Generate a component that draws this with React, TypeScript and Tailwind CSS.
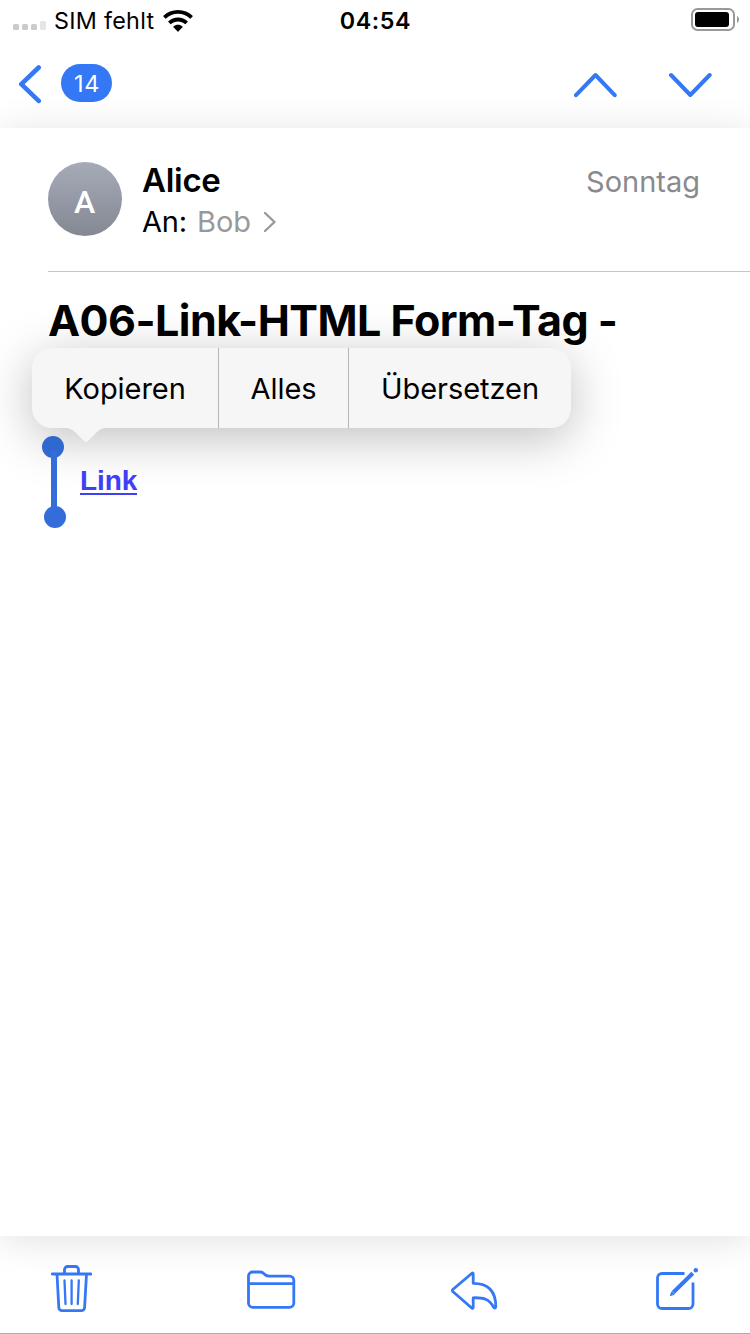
import type { ReactNode } from "react";

function StatusBar() {
  return (
    <div className="grid h-10 grid-cols-3 items-center pl-3 pr-[10px] text-[23.3px] leading-none">
      <div className="flex items-center">
        <svg width="34" height="12" viewBox="0 0 34 12" className="mt-[11px]">
          <rect x="1" y="5" width="6" height="6" rx="1.6" fill="#cbcbcb" />
          <rect x="10" y="5" width="6" height="6" rx="1.6" fill="#cbcbcb" />
          <rect x="19" y="5" width="6" height="6" rx="1.6" fill="#cbcbcb" />
          <rect x="28" y="2" width="6" height="9" rx="1.6" fill="#e5e5e5" />
        </svg>
        <span className="ml-2 mt-[2px] whitespace-nowrap tracking-[0.3px]">SIM fehlt</span>
        <svg width="30" height="22" viewBox="0 0 30 21.200" preserveAspectRatio="none" className="ml-[9px] mt-[2px] shrink-0">
          <path d="M15 0C9.3 0 4.100 2.100.4 5.600a.5.500 0 0 0 0 .7l2 2a.5.500 0 0 0 .7 0C6.200 5.400 10.400 3.700 15 3.700s8.800 1.700 11.900 4.600a.5.500 0 0 0 .7 0l2-2a.5.500 0 0 0 0-.7C25.900 2.100 20.700 0 15 0z" />
          <path d="M15 7.200c-3.700 0-7.100 1.400-9.600 3.700a.5.500 0 0 0 0 .7l2 2a.5.500 0 0 0 .7 0C9.900 12 12.300 11 15 11s5.100 1 6.900 2.600a.5.500 0 0 0 .7 0l2-2a.5.500 0 0 0 0-.7C22.100 8.600 18.700 7.200 15 7.200z" />
          <path d="M15 14.300c-1.700 0-3.300.6-4.500 1.600a.5.500 0 0 0 0 .8l4.100 4.100a.5.500 0 0 0 .8 0l4.100-4.100a.5.500 0 0 0 0-.8c-1.200-1-2.800-1.600-4.500-1.600z" />
        </svg>
      </div>
      <div className="mt-[2px] pr-px text-center font-semibold tracking-[0.6px]">04:54</div>
      <div className="flex justify-end">
        <svg width="50" height="24" viewBox="0 0 50 24" fill="none">
          <rect x="2" y="1" width="42" height="21" rx="5.500" stroke="#999" strokeWidth="2" />
          <rect x="5" y="4" width="34" height="15" rx="3" fill="#000" />
          <path d="M47 8v7c1.300-.6 2-2 2-3.500S48.300 8.600 47 8z" fill="#999" />
        </svg>
      </div>
    </div>
  );
}

function NavBar() {
  return (
    <div className="flex h-[88px] items-start text-[#3478f6]">
      <svg width="24" height="40" viewBox="0 0 24 40" className="ml-[18px] mt-6" fill="none" stroke="currentColor" strokeWidth="4.600" strokeLinecap="round" strokeLinejoin="round">
        <path d="M20.700 3.500 3.300 20.200 20.700 36.900" />
      </svg>
      <div className="ml-[19px] mt-6 flex h-[38px] w-[51px] items-center justify-center rounded-full bg-[#3478f6] pl-px pt-px text-[23.500px] tracking-[0.6px] text-white">14</div>
      <svg width="44" height="26" viewBox="0 0 44 26" className="ml-auto mt-8" fill="none" stroke="currentColor" strokeWidth="4" strokeLinecap="round" strokeLinejoin="round">
        <path d="M3 23.200 22.500 3 41.700 23.200" />
      </svg>
      <svg width="44" height="26" viewBox="0 0 44 26" className="ml-[51px] mr-[38px] mt-8" fill="none" stroke="currentColor" strokeWidth="4" strokeLinecap="round" strokeLinejoin="round">
        <path d="M3 3 22.300 23 41.700 3" />
      </svg>
    </div>
  );
}

function MessageHeader() {
  return (
    <header className="ml-12 flex h-36 shrink-0 items-start border-b border-[#c6c6c8] pr-[50px] pt-[34px]">
      <div className="flex size-[74px] items-center justify-center rounded-full bg-linear-to-b from-[#a6abb9] to-[#848892] pr-px pt-[5px] font-['Roboto','Inter',sans-serif] text-[32px] font-medium leading-none text-white">
        A
      </div>
      <div className="ml-5">
        <div className="-mt-px text-[33px] font-semibold leading-[38px] tracking-[-0.3px]">Alice</div>
        <div className="mt-1 flex items-center text-[29px] leading-[38px]">
          <span className="tracking-[-0.2px]">An:</span>
          <span className="ml-[10px] text-[#999]">Bob</span>
          <svg width="14" height="22" viewBox="0 0 14 22" className="ml-3" fill="none" stroke="#999" strokeWidth="2.400" strokeLinecap="round" strokeLinejoin="round">
            <path d="M2 2 11.500 11 2 20" />
          </svg>
        </div>
      </div>
      <div className="ml-auto text-[29px] leading-[40px] text-[#8a8a8e]">Sonntag</div>
    </header>
  );
}

function EditMenu() {
  return (
    <div className="absolute left-8 top-[220px] flex h-20 w-[539px] rounded-[20px] bg-[#f6f6f6] text-[29px] tracking-[-0.05px] shadow-[0_10px_50px_rgba(0,0,0,0.26)]">
      <div className="flex w-[187px] items-center justify-center border-r border-[#b5b5b5] pt-[2px]">Kopieren</div>
      <div className="flex w-[130px] items-center justify-center border-r border-[#b5b5b5] pt-[2px]">Alles</div>
      <div className="flex flex-1 items-center justify-center pt-[2px]">Übersetzen</div>
      <svg width="44" height="16" viewBox="0 0 44 16" className="absolute left-8 top-[79px]" fill="#f6f6f6">
        <path d="M0 0V1C6 1 9 3 12 6l8 8c1.500 1.400 2.500 1.400 4 0l8-8c3-3 6-5 12-5V0z" />
      </svg>
    </div>
  );
}

function Icon({ w, h, children }: { w: number; h: number; children: ReactNode }) {
  return (
    <svg width={w} height={h} viewBox={`0 0 ${w} ${h}`} fill="none" stroke="currentColor" strokeWidth="2.800" strokeLinecap="round" strokeLinejoin="round">
      {children}
    </svg>
  );
}

function Toolbar() {
  return (
    <footer className="flex h-[98px] shrink-0 items-start justify-between border-b border-[#ababab] pl-[50px] pr-[50px] pt-7 text-[#3478f6]">
      <Icon w={42} h={50}>
        <path d="M2.300 10H41M14.500 10V5.500a3 3 0 0 1 3-3h8a3 3 0 0 1 3 3V10M7 10l1.800 33.500a3.500 3.500 0 0 0 3.500 3.200h18.800a3.500 3.500 0 0 0 3.500-3.200L36.500 10" />
        <path d="M14.500 16.500 15.500 40M21.600 16.500V40M28.800 16.500 27.800 40" strokeWidth="2.300" />
      </Icon>
      <Icon w={52} h={50}>
        <path d="M3.500 39v-27a4 4 0 0 1 4-4h7.300c2 0 3 .4 4.200 1.700l1.300 1.200c1.200 1.100 2 1.200 3.700 1.200H44.500a4.300 4.300 0 0 1 4.300 4.300v22.600a4.300 4.300 0 0 1-4.300 4.300H7.800a4.300 4.300 0 0 1-4.300-4.300zM3.500 19.700H48.800" />
      </Icon>
      <div className="mr-[3px]">
        <Icon w={48} h={50}>
          <path d="M22 9.200 2.800 25.500a1.400 1.400 0 0 0 0 2L22 44.300a.8.800 0 0 0 1.200-.7V33.800c10-.3 16 1 20.300 9.200.8 1.500 2.300 1.400 2.300-.4C45.800 27 38 19.300 23.200 19.300V10c0-.8-.6-1.300-1.200-.8z" />
        </Icon>
      </div>
      <Icon w={46} h={50}>
        <path d="M30.500 9.500H8a4.500 4.500 0 0 0-4.500 4.500v26a4.500 4.500 0 0 0 4.500 4.500h26.500a4.500 4.500 0 0 0 4.500-4.500V18.500" strokeLinecap="butt" />
        <path d="M19.200 28.500 38.800 9.200" strokeWidth="4" strokeLinecap="butt" />
        <path d="m16.500 31.300 1.200-3.400 2.200 2.200z" fill="currentColor" strokeWidth="1" />
        <circle cx="41.800" cy="6.200" r="2.200" fill="currentColor" stroke="none" />
      </Icon>
    </footer>
  );
}

export default function App() {
  return (
    <div className="flex h-[1334px] w-[750px] flex-col overflow-hidden bg-white font-['Inter','Liberation_Sans',sans-serif] text-black">
      <StatusBar />
      <NavBar />
      <main className="relative flex flex-1 flex-col bg-white shadow-[0_4px_36px_rgba(0,0,0,0.12)]">
        <MessageHeader />
        <h1 className="ml-12 mt-[21px] whitespace-nowrap text-[43px] font-bold leading-[54px] tracking-[-0.53px]">A06-Link-HTML Form-Tag -</h1>
        <EditMenu />
        <div className="ml-[42px] mt-[89px] flex items-start">
          <svg width="26" height="92" viewBox="0 0 26 92" fill="#326dda" className="relative">
            <circle cx="11" cy="11" r="11" fill="#2f69cf" />
            <path d="M9 15h6v62H9z" />
            <circle cx="13" cy="81" r="11" />
          </svg>
          <a className="relative ml-3 mt-[33px] border-b-2 border-[#3f3ff5] font-['Liberation_Sans',Arial,sans-serif] text-[28px] font-bold leading-[24px] tracking-[-0.1px] text-[#3f3ff5]">Link</a>
        </div>
      </main>
      <Toolbar />
    </div>
  );
}
